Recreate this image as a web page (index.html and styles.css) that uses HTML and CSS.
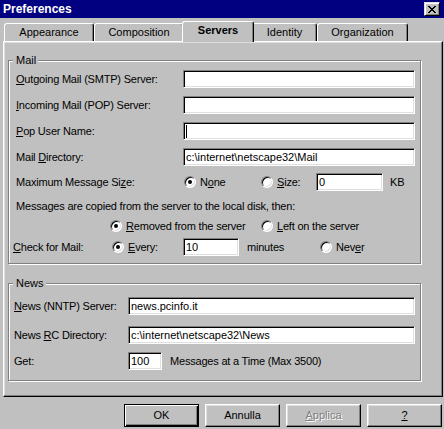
FILE: index.html
```html
<!DOCTYPE html>
<html>
<head>
<meta charset="utf-8">
<title>Preferences</title>
<link rel="stylesheet" href="styles.css">
</head>
<body>
<div class="titlebar">
  <span class="title">Preferences</span>
  <span class="close"><svg width="8" height="7" viewBox="0 0 8 7" shape-rendering="crispEdges"><path fill="#000" d="M0 0h2v1h-2zM6 0h2v1h-2zM1 1h2v1h-2zM5 1h2v1h-2zM2 2h4v1h-4zM3 3h2v1h-2zM2 4h4v1h-4zM1 5h2v1h-2zM5 5h2v1h-2zM0 6h2v1h-2zM6 6h2v1h-2z"/></svg></span>
</div>
<div class="tabs">
  <div class="tab t-app">Appearance</div>
  <div class="tab t-comp">Composition</div>
  <div class="tab sel t-serv">Servers</div>
  <div class="tab t-id">Identity</div>
  <div class="tab t-org">Organization</div>
</div>
<div class="panel">
  <fieldset class="group mail">
    <legend>Mail</legend>
    <div class="row">
      <span class="lbl"><u>O</u>utgoing Mail (SMTP) Server:</span>
      <div class="field f-wide"></div>
    </div>
    <div class="row mt8">
      <span class="lbl"><u>I</u>ncoming Mail (POP) Server:</span>
      <div class="field f-wide"></div>
    </div>
    <div class="row mt8">
      <span class="lbl"><u>P</u>op User Name:</span>
      <div class="field f-wide"><span class="caret"></span></div>
    </div>
    <div class="row mt8">
      <span class="lbl">Mail <u>D</u>irectory:</span>
      <div class="field f-wide">c:\internet\netscape32\Mail</div>
    </div>
    <div class="row mt7">
      <span class="lbl lbl-size">Maximum Message Si<u>z</u>e:</span>
      <span class="opt o-none"><span class="radio on"></span><span>N<u>o</u>ne</span></span>
      <span class="opt o-size"><span class="radio"></span><span><u>S</u>ize:</span></span>
      <div class="field f-size">0</div>
      <span class="unit">KB</span>
    </div>
    <div class="row mt6">
      <span>Messages are copied from the server to the local disk, then:</span>
    </div>
    <div class="row mt2 r-removed">
      <span class="opt o-removed"><span class="radio on"></span><span><u>R</u>emoved from the server</span></span>
      <span class="opt"><span class="radio"></span><span><u>L</u>eft on the server</span></span>
    </div>
    <div class="row mt3 r-check">
      <span class="lbl lbl-check"><u>C</u>heck for Mail:</span>
      <span class="opt o-every"><span class="radio on"></span><span><u>E</u>very:</span></span>
      <div class="field f-every">10</div>
      <span class="minutes">minutes</span>
      <span class="opt"><span class="radio"></span><span>Nev<u>e</u>r</span></span>
    </div>
  </fieldset>
  <fieldset class="group news">
    <legend>News</legend>
    <div class="row nrow">
      <span class="lbl lbl-news"><u>N</u>ews (NNTP) Server:</span>
      <div class="field f-news">news.pcinfo.it</div>
    </div>
    <div class="row nrow mt11">
      <span class="lbl lbl-news">News <u>R</u>C Directory:</span>
      <div class="field f-news">c:\internet\netscape32\News</div>
    </div>
    <div class="row nrow mt8">
      <span class="lbl lbl-news">Get:</span>
      <div class="field f-get">100</div>
      <span class="get-note">Messages at a Time (Max 3500)</span>
    </div>
  </fieldset>
</div>
<div class="buttons">
  <button class="btn default">OK</button>
  <button class="btn">Annulla</button>
  <button class="btn disabled"><span><u>A</u>pplica</span></button>
  <button class="btn"><u>?</u></button>
</div>
</body>
</html>
```

FILE: styles.css
```css
html, body {
  margin: 0;
  padding: 0;
}
body {
  width: 444px;
  height: 429px;
  overflow: hidden;
  background: #c0c0c0;
  color: #000;
  font-family: "Liberation Sans", Arial, sans-serif;
  font-size: 11px;
  line-height: 13px;
}
u {
  text-decoration: underline;
  text-underline-offset: 1px;
}

/* title bar */
.titlebar {
  height: 18px;
  background: #000080;
  color: #fff;
  display: flex;
  align-items: center;
  justify-content: space-between;
  padding: 0 4px 0 3px;
  font-weight: bold;
  font-size: 12px;
}
.close {
  width: 16px;
  height: 14px;
  box-sizing: border-box;
  background: #c0c0c0;
  border: 1px solid;
  border-color: #dfdfdf #000 #000 #dfdfdf;
  box-shadow: inset 1px 1px #fff, inset -1px -1px #808080;
  display: flex;
  align-items: center;
  justify-content: center;
}
.close svg {
  display: block;
}

/* tabs */
.tabs {
  display: flex;
  align-items: flex-end;
  height: 20px;
  margin-top: 3px;
  padding-left: 4px;
  position: relative;
  z-index: 1;
}
.tab {
  height: 18px;
  box-sizing: border-box;
  background: #c0c0c0;
  border-top: 1px solid #fff;
  border-left: 1px solid #fff;
  border-right: 1px solid #000;
  border-radius: 3px 3px 0 0;
  box-shadow: inset -1px 0 #808080;
  display: flex;
  align-items: center;
  justify-content: center;
  padding-bottom: 1px;
}
.t-app { width: 90px; }
.t-comp { width: 90px; }
.t-serv { width: 72px; }
.t-id { width: 65px; }
.t-org { width: 91px; }
.tab.sel {
  height: 21px;
  margin: 0 -2px -1px;
  font-weight: bold;
  padding-bottom: 3px;
  position: relative;
  z-index: 2;
}

/* panel */
.panel {
  margin-left: 3px;
  width: 440px;
  height: 356px;
  box-sizing: border-box;
  border: 1px solid;
  border-color: #fff #000 #000 #fff;
  box-shadow: inset -1px -1px #808080, inset 1px 1px #dfdfdf;
  padding: 12px 0 0 4px;
  letter-spacing: -0.2px;
}

/* group boxes */
.group {
  margin: 0;
  width: 413px;
  min-inline-size: 0;
  box-sizing: border-box;
  border: 1px solid #808080;
  box-shadow: inset 1px 1px #fff, 1px 1px #fff;
  padding: 3px 0 7px 7px;
}
.group legend {
  padding: 0 2px 0 3px;
  margin-left: -3px;
  line-height: 13px;
  background: #c0c0c0;
  letter-spacing: 0;
}
.news {
  margin-top: 13px;
  padding: 7px 0 10px 7px;
}

/* rows */
.row {
  display: flex;
  align-items: center;
  height: 18px;
  white-space: nowrap;
}
.mt2 { margin-top: 2px; }
.mt3 { margin-top: 3px; }
.mt6 { margin-top: 6px; }
.mt7 { margin-top: 7px; }
.mt8 { margin-top: 8px; }
.mt11 { margin-top: 11px; }

.lbl {
  width: 167px;
  flex: none;
}
.lbl-size { width: 168px; }
.r-check { margin-left: -3px; }
.lbl-check { width: 99px; }
.r-removed { padding-left: 94px; }
.nrow { margin-left: -2px; }
.lbl-news { width: 114px; }

/* text fields */
.field {
  height: 18px;
  box-sizing: border-box;
  flex: none;
  background: #fff;
  border: 1px solid;
  border-color: #808080 #fff #fff #808080;
  box-shadow: inset 1px 1px #000, inset -1px -1px #dfdfdf;
  padding-left: 2px;
  display: flex;
  align-items: center;
  overflow: hidden;
  letter-spacing: 0;
}
.f-wide { width: 232px; }
.f-size { width: 67px; }
.f-every { width: 56px; }
.f-news { width: 287px; }
.f-get { width: 34px; }
.caret {
  width: 1px;
  height: 13px;
  background: #000;
}

/* radios */
.opt {
  display: flex;
  align-items: center;
  gap: 4px;
  flex: none;
}
.o-none { width: 77px; }
.o-size { width: 55px; }
.o-removed { width: 151px; }
.o-every { width: 71px; }
.radio {
  width: 12px;
  height: 12px;
  box-sizing: border-box;
  flex: none;
  border-radius: 50%;
  border: 1px solid;
  border-color: #808080 #fff #fff #808080;
  background: #fff;
  box-shadow: inset 1px 1px #000, inset -1px -1px #dfdfdf;
  position: relative;
}
.radio.on::after {
  content: "";
  position: absolute;
  left: 3px;
  top: 3px;
  width: 4px;
  height: 4px;
  border-radius: 50%;
  background: #000;
}
.unit { margin-left: 7px; }
.minutes {
  margin-left: 8px;
  width: 73px;
  flex: none;
}
.get-note { margin-left: 8px; }

/* buttons */
.buttons {
  display: flex;
  justify-content: flex-end;
  gap: 6px;
  margin-top: 7px;
  padding-right: 2px;
}
.btn {
  width: 75px;
  height: 23px;
  box-sizing: border-box;
  margin: 0;
  padding: 0;
  font: inherit;
  color: #000;
  background: #c0c0c0;
  border: 1px solid;
  border-color: #fff #000 #000 #fff;
  box-shadow: inset -1px -1px #808080, inset 1px 1px #dfdfdf;
  display: flex;
  align-items: center;
  justify-content: center;
}
.btn.default {
  border-color: #000;
  box-shadow: inset 1px 1px #fff, inset -1px -1px #000, inset -2px -2px #808080;
}
.btn.disabled {
  color: #808080;
  text-shadow: 1px 1px #fff;
}
```
